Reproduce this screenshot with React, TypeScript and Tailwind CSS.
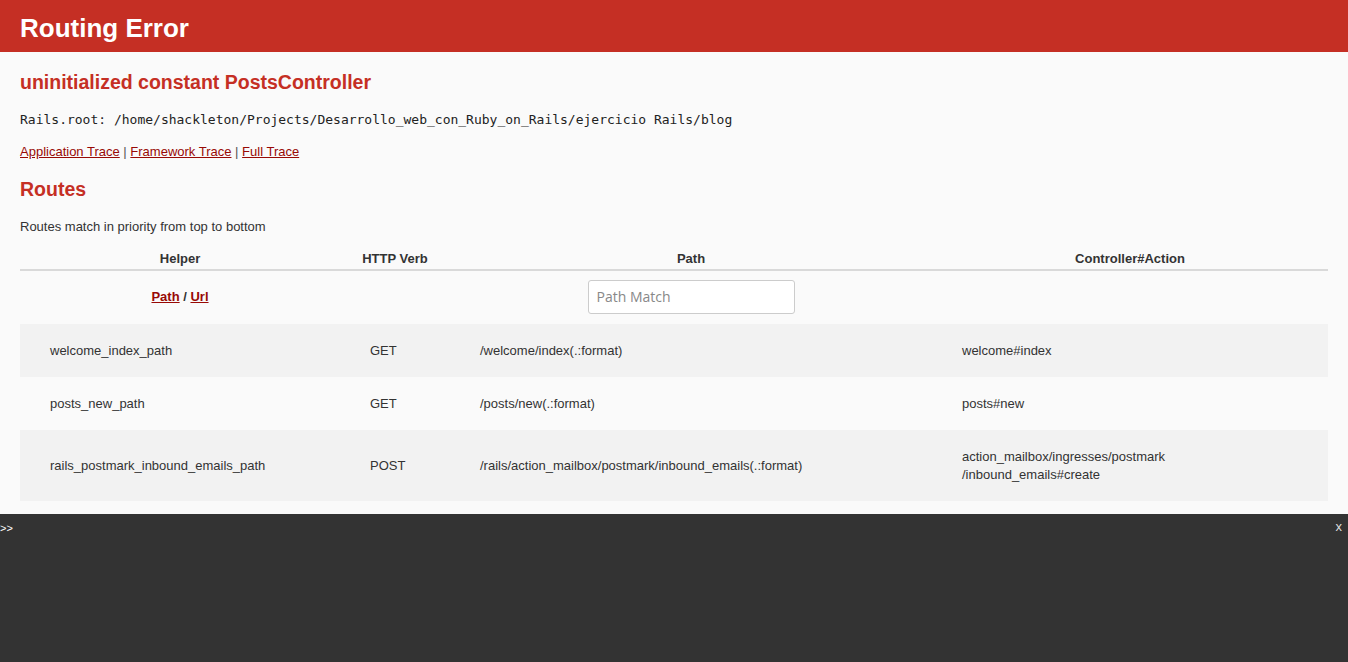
import React from 'react';

// Route rows shown in the table
const routes = [
  {
    helper: 'welcome_index_path',
    verb: 'GET',
    path: '/welcome/index(.:format)',
    action: ['welcome#index'],
  },
  {
    helper: 'posts_new_path',
    verb: 'GET',
    path: '/posts/new(.:format)',
    action: ['posts#new'],
  },
  {
    helper: 'rails_postmark_inbound_emails_path',
    verb: 'POST',
    path: '/rails/action_mailbox/postmark/inbound_emails(.:format)',
    action: ['action_mailbox/ingresses/postmark', '/inbound_emails#create'],
  },
];

const sans = "font-['Liberation_Sans',Arial,sans-serif]";

export default function App() {
  return (
    <div className={`min-h-[662px] bg-[#fafafa] text-[#333] text-[13px] ${sans}`}>
      {/* Red title bar */}
      <header className="h-[52px] bg-[#c52f24] flex items-center px-5 pt-[3px]">
        <h1 className="text-[26px] font-bold text-white leading-none">Routing Error</h1>
      </header>

      <main className="px-5">
        <h2 className="mt-[19px] text-[19.5px] leading-[22px] font-bold text-[#c52f24]">
          uninitialized constant PostsController
        </h2>

        <p className="mt-[19px] leading-4 font-['DejaVu_Sans_Mono',monospace] text-[13px] text-[#222]">
          Rails.root: /home/shackleton/Projects/Desarrollo_web_con_Ruby_on_Rails/ejercicio Rails/blog
        </p>

        <div className="mt-4 leading-4 text-[#555]">
          <a href="#" className="text-[#980905] underline">Application Trace</a>
          {' | '}
          <a href="#" className="text-[#980905] underline">Framework Trace</a>
          {' | '}
          <a href="#" className="text-[#980905] underline">Full Trace</a>
        </div>

        <h2 className="mt-[18px] text-[19.5px] leading-[22px] font-bold text-[#c52f24]">Routes</h2>

        <p className="mt-[19px] leading-4">Routes match in priority from top to bottom</p>

        {/* Routes table */}
        <table className="mt-4 w-full border-collapse table-fixed">
          <thead>
            <tr className="border-b-2 border-[#d9d9d9]">
              <th className="w-[320px] pb-[2px] leading-4 font-bold text-center">Helper</th>
              <th className="w-[110px] pb-[2px] leading-4 font-bold text-center">HTTP Verb</th>
              <th className="w-[482px] pb-[2px] leading-4 font-bold text-center">Path</th>
              <th className="pb-[2px] leading-4 font-bold text-center">Controller#Action</th>
            </tr>
          </thead>
          <tbody>
            <tr>
              <td className="h-[54px] pb-[1px] text-center font-bold">
                <a href="#" className="text-[#980905] underline">Path</a>
                {' / '}
                <a href="#" className="text-[#980905] underline">Url</a>
              </td>
              <td></td>
              <td className="pb-[2px] text-center">
                <input
                  placeholder="Path Match"
                  className="w-[207px] h-[34px] px-2 bg-white border border-[#ccc] rounded-[3px] text-[14px] font-['Open_Sans',sans-serif] placeholder:text-[#888] outline-none align-middle"
                />
              </td>
              <td></td>
            </tr>
            {routes.map((r, i) => (
              <tr key={r.helper} className={i % 2 === 0 ? 'bg-[#f2f2f2]' : ''}>
                <td className="px-[30px] py-[17.5px] leading-[18px]">{r.helper}</td>
                <td className="px-[30px] py-[17.5px] leading-[18px]">{r.verb}</td>
                <td className="px-[30px] py-[17.5px] leading-[18px]">{r.path}</td>
                <td className="px-[30px] py-[17.5px] leading-[18px]">
                  {r.action.map((line) => (
                    <div key={line}>{line}</div>
                  ))}
                </td>
              </tr>
            ))}
          </tbody>
        </table>
      </main>

      {/* Web console */}
      <div className="mt-[13px] h-[148px] bg-[#333] text-white flex justify-between items-start">
        <span className="pt-[6px] leading-4 text-[11px]">&gt;&gt;</span>
        <span className="pt-[5px] pr-[6px] text-[13px] leading-4 text-[#ddd]">x</span>
      </div>
    </div>
  );
}
